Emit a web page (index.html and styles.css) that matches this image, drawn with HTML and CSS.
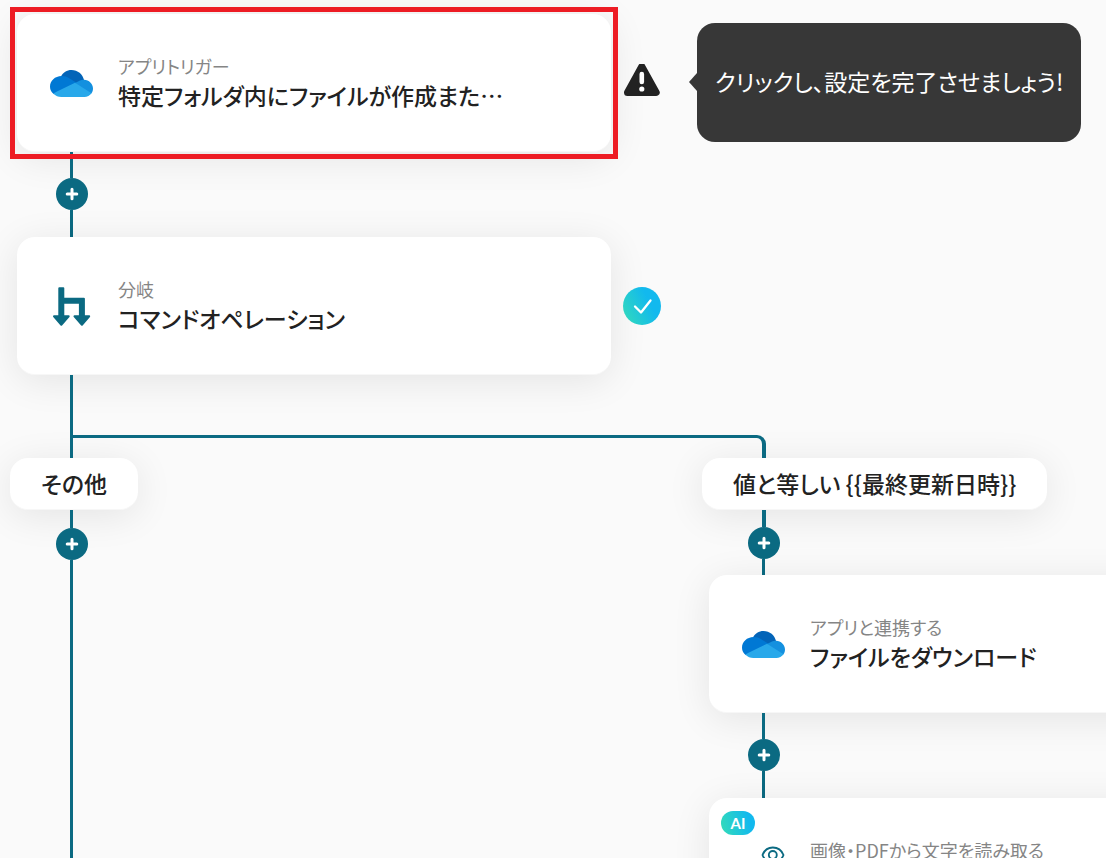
FILE: index.html
```html
<!DOCTYPE html>
<html lang="ja">
<head>
<meta charset="utf-8">
<meta name="viewport" content="width=device-width, initial-scale=1">
<title>フローボット</title>
<link rel="stylesheet" href="styles.css">
</head>
<body>
<svg class="defs" aria-hidden="true">
  <defs>
    <symbol id="cloud" viewBox="0 -1 44 44">
      <path fill="#0364b8" d="M12 14.500C14 10.600 17.800 8 22.500 8C28.700 8 33.800 12.300 35 18L26 22.500L15 16Z"/>
      <path fill="#0078d4" d="M12.500 14.100C15.500 14 18 14.800 20.200 16.200L27.500 20.800L5 32.300C2.500 30.500 1 27.700 1 24.800C1 18.900 6 14.200 12.500 14.100Z"/>
      <path fill="#1490df" d="M26 21L31 18.500C32.300 17.900 33.600 17.700 35 17.800C40 18 44 21.800 44 26.500C44 28.500 43.400 30.200 42.300 31.600L33 28Z"/>
      <path fill="#28a8ea" d="M26 20.800L42.500 31.200C40.900 33.600 38.300 35 35.300 35H12.300C9.300 35 6.500 34 4.300 31.500L8 29.500Z"/>
    </symbol>
    <symbol id="plus" viewBox="0 0 16 16">
      <path d="M8 3.200V12.800M3.200 8H12.800" fill="none" stroke="#fff" stroke-width="3" stroke-linecap="round"/>
    </symbol>
  </defs>
</svg>
<main class="flow">
  <div class="step">
    <article class="card card-selected">
      <svg class="card-icon" aria-hidden="true"><use href="#cloud"/></svg>
      <div class="card-text">
        <p class="kind">アプリトリガー</p>
        <h2 class="title">特定フォルダ内にファイルが作成また…</h2>
      </div>
    </article>
    <svg class="status" viewBox="0 2 38 38" role="img" aria-label="警告">
      <path d="M18.800 4.500L33.200 30.500H4.500Z" fill="#222" stroke="#222" stroke-width="7" stroke-linejoin="round"/>
      <path d="M18.800 12V20" stroke="#fff" stroke-width="4.600" stroke-linecap="round"/>
      <circle cx="18.800" cy="27" r="2.600" fill="#fff"/>
    </svg>
    <p class="tooltip" role="status">クリックし、設定を完了させましょう!</p>
  </div>
  <div class="link">
    <span class="line"></span>
    <button class="add" type="button" aria-label="追加"><svg class="add-icon"><use href="#plus"/></svg></button>
    <span class="line line-fill"></span>
  </div>
  <div class="step">
    <article class="card">
      <svg class="card-icon" viewBox="0 0 44 44" aria-hidden="true">
        <g fill="#0b6a82" stroke="#0b6a82" stroke-width="2" stroke-linejoin="round">
          <path d="M10.300 4.300H14.300V14.800H34.900V32.500H30.900V18.800H14.300V32.500H10.300Z"/>
          <path d="M5 32.300H19.700L12.300 40.800Z"/>
          <path d="M25.500 32.300H40.200L32.900 40.800Z"/>
        </g>
      </svg>
      <div class="card-text">
        <p class="kind">分岐</p>
        <h2 class="title">コマンドオペレーション</h2>
      </div>
    </article>
    <svg class="status" viewBox="0 0 38 38" role="img" aria-label="完了">
      <defs><linearGradient id="done" x1="0" y1="1" x2="1" y2="0.500"><stop offset="0" stop-color="#34dcb8"/><stop offset="0.800" stop-color="#12b9ee"/></linearGradient></defs>
      <circle cx="19" cy="19" r="19" fill="url(#done)"/>
      <path d="M12 19.500L18 25.500L27.500 13.500" fill="none" stroke="#fff" stroke-width="2.300" stroke-linecap="round" stroke-linejoin="round"/>
    </svg>
  </div>
  <div class="split">
    <span class="line"></span>
    <span class="elbow"></span>
  </div>
  <div class="branches">
    <section class="branch">
      <h3 class="label">その他</h3>
      <div class="link link-open">
        <span class="line line-short"></span>
        <button class="add" type="button" aria-label="追加"><svg class="add-icon"><use href="#plus"/></svg></button>
        <span class="line line-fill"></span>
      </div>
    </section>
    <section class="branch">
      <h3 class="label">値と等しい {{最終更新日時}}</h3>
      <div class="link link-compact">
        <span class="line line-thick"></span>
        <button class="add" type="button" aria-label="追加"><svg class="add-icon"><use href="#plus"/></svg></button>
        <span class="line line-fill"></span>
      </div>
      <article class="card">
        <svg class="card-icon" aria-hidden="true"><use href="#cloud"/></svg>
        <div class="card-text">
          <p class="kind">アプリと連携する</p>
          <h2 class="title">ファイルをダウンロード</h2>
        </div>
      </article>
      <div class="link">
        <span class="line"></span>
        <button class="add" type="button" aria-label="追加"><svg class="add-icon"><use href="#plus"/></svg></button>
        <span class="line line-fill"></span>
      </div>
      <article class="card">
        <span class="ai">AI</span>
        <svg class="card-icon" viewBox="0 0 44 44" fill="none" stroke="#0b6a82" stroke-width="1.800" aria-hidden="true">
          <path d="M21.500 10C23.500 5 27.500 2.500 31.800 2.500S40.500 5 42.500 10C40.500 15 36 17.500 31.800 17.500S23.500 15 21.500 10Z"/>
          <circle cx="31.800" cy="10" r="4"/>
        </svg>
        <div class="card-text">
          <p class="kind">画像・PDFから文字を読み取る</p>
          <h2 class="title">&nbsp;</h2>
        </div>
      </article>
    </section>
  </div>
</main>
</body>
</html>
```
FILE: styles.css
```css
* { box-sizing: border-box; }

body {
  margin: 0;
  height: 100vh;
  overflow: hidden;
  background: #fafafa;
  color: #222;
  font-family: "Noto Sans CJK JP", sans-serif;
  font-feature-settings: "palt";
}

h2, h3, p { margin: 0; }

.defs { position: absolute; width: 0; height: 0; }

.flow { padding: 14px 0 0 10px; }

.step { display: flex; align-items: center; }

.card {
  position: relative;
  display: flex;
  align-items: center;
  gap: 25px;
  flex: none;
  width: 594px;
  height: 138px;
  margin-left: 7px;
  padding: 0 32px;
  border-radius: 18px;
  border-bottom: 1px solid #f7f7f7;
  background: #fff;
  box-shadow: 0 6px 38px rgba(0, 0, 0, 0.09);
}

.card-selected::after {
  content: "";
  position: absolute;
  z-index: 1;
  inset: -7px -7px -8px;
  border: 5px solid #ed1c24;
}

.card-icon { flex: none; width: 44px; height: 44px; }

.card-text { min-width: 0; padding-bottom: 2px; white-space: nowrap; }

.kind { color: #858585; font-size: 18px; line-height: 26px; }

.title { font-size: 23px; font-weight: 500; line-height: 32px; }

.status { position: relative; flex: none; width: 38px; height: 38px; margin-left: 12px; }

.tooltip {
  position: relative;
  margin: 0 0 2px 36px;
  padding: 42px 18px 45px;
  border-radius: 18px;
  background: #373737;
  color: #fff;
  font-size: 23px;
  line-height: 32px;
  white-space: nowrap;
}

.tooltip::before {
  content: "";
  position: absolute;
  top: 50px;
  left: -8px;
  border: 9px solid transparent;
  border-left: 0;
  border-right: 8px solid #373737;
}

.link {
  position: relative;
  display: flex;
  flex-direction: column;
  align-items: flex-start;
  height: 85px;
  padding-left: 46px;
}

.link-compact { height: 65px; }

.link-open { flex: 1; height: auto; }

.line {
  flex: none;
  width: 3px;
  height: 26px;
  margin-left: 14px;
  background: #0b6a82;
}

.line-short { height: 18px; }

.line-thick { width: 4px; height: 17px; }

.line-fill { flex: 1; }

.add {
  display: grid;
  place-items: center;
  flex: none;
  width: 32px;
  height: 32px;
  padding: 0;
  border: 0;
  border-radius: 50%;
  background: #0b6a82;
  cursor: pointer;
}

.add-icon { width: 16px; height: 16px; }

.split { position: relative; display: flex; height: 83px; padding-left: 46px; }

.split .line { height: auto; }

.elbow {
  flex: none;
  width: 693px;
  margin-top: 60px;
  border-top: 3px solid #0b6a82;
  border-right: 4px solid #0b6a82;
  border-radius: 0 9px 0 0;
}

.branches { display: grid; grid-template-columns: 692px 1fr; }

.branch { display: flex; flex-direction: column; align-items: flex-start; min-width: 0; }

.label {
  padding: 10px 31px;
  border-radius: 18px;
  border-bottom: 1px solid #f7f7f7;
  background: #fff;
  box-shadow: 0 6px 38px rgba(0, 0, 0, 0.09);
  font-size: 23px;
  font-weight: 500;
  line-height: 31px;
  white-space: nowrap;
}

.ai {
  position: absolute;
  top: 13px;
  left: 12px;
  width: 34px;
  border-radius: 12px;
  background: linear-gradient(75deg, #34dcb8, #12b9ee 80%);
  color: #fff;
  font-family: Lato, sans-serif;
  font-size: 15px;
  font-weight: 700;
  line-height: 24px;
  text-align: center;
}
```
